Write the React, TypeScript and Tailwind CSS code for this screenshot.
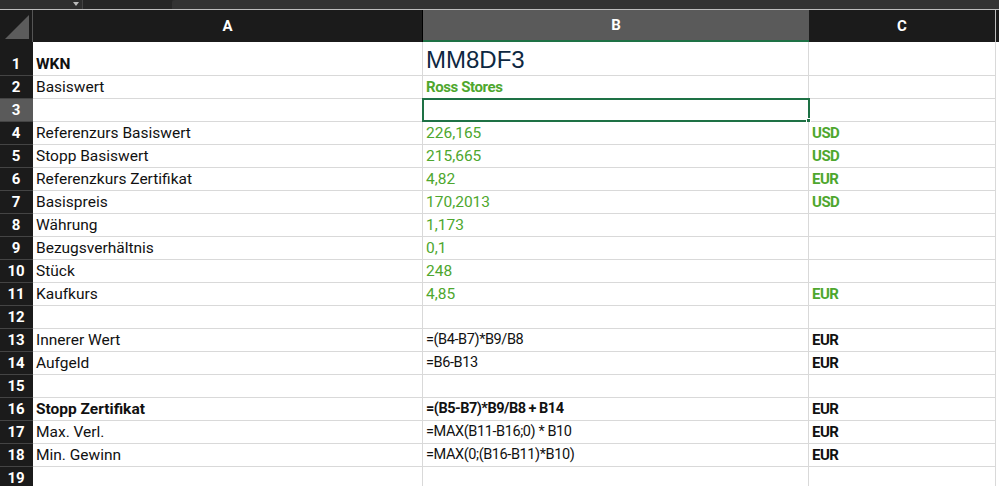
type Row = {
  n: number;
  a?: string;
  b?: string;
  c?: string;
  aBold?: boolean;
  bKind?: "green" | "greenBold" | "plain" | "bold" | "big";
  cKind?: "green" | "black";
  h?: string;
};

const rows: Row[] = [
  { n: 1, a: "WKN", aBold: true, b: "MM8DF3", bKind: "big", h: "h-[34px]" },
  { n: 2, a: "Basiswert", b: "Ross Stores", bKind: "greenBold" },
  { n: 3 },
  { n: 4, a: "Referenzurs Basiswert", b: "226,165", bKind: "green", c: "USD", cKind: "green" },
  { n: 5, a: "Stopp Basiswert", b: "215,665", bKind: "green", c: "USD", cKind: "green" },
  { n: 6, a: "Referenzkurs Zertifikat", b: "4,82", bKind: "green", c: "EUR", cKind: "green" },
  { n: 7, a: "Basispreis", b: "170,2013", bKind: "green", c: "USD", cKind: "green" },
  { n: 8, a: "Währung", b: "1,173", bKind: "green" },
  { n: 9, a: "Bezugsverhältnis", b: "0,1", bKind: "green" },
  { n: 10, a: "Stück", b: "248", bKind: "green" },
  { n: 11, a: "Kaufkurs", b: "4,85", bKind: "green", c: "EUR", cKind: "green" },
  { n: 12 },
  { n: 13, a: "Innerer Wert", b: "=(B4-B7)*B9/B8", bKind: "plain", c: "EUR", cKind: "black" },
  { n: 14, a: "Aufgeld", b: "=B6-B13", bKind: "plain", c: "EUR", cKind: "black" },
  { n: 15 },
  { n: 16, a: "Stopp Zertifikat", aBold: true, b: "=(B5-B7)*B9/B8 + B14", bKind: "bold", c: "EUR", cKind: "black" },
  { n: 17, a: "Max. Verl.", b: "=MAX(B11-B16;0) * B10", bKind: "plain", c: "EUR", cKind: "black" },
  { n: 18, a: "Min. Gewinn", b: "=MAX(0;(B16-B11)*B10)", bKind: "plain", c: "EUR", cKind: "black" },
  { n: 19 },
];

const bClass = {
  green: "text-[15.5px] text-[#4ea72e] pb-[1px]",
  greenBold: "text-[15px] font-bold text-[#4ea72e] tracking-[-0.4px] pb-[1px]",
  plain: "text-[14.5px] text-[#111] tracking-[-0.4px] pb-[1px]",
  bold: "text-[14.5px] font-bold text-[#111] tracking-[-0.5px] pb-[1px]",
  big: "text-[24px] leading-[28px] text-[#0e2841] font-['Liberation_Sans',sans-serif] pb-[1px]",
};

export default function App() {
  return (
    <div className="w-[999px] h-[486px] overflow-hidden bg-white font-['Roboto',sans-serif]">
      {/* formula bar strip */}
      <div className="flex h-[9px] bg-[#2a2a2a]">
        <div className="flex w-[82px] items-start justify-end bg-[#2e2e2e] pr-[3px]">
          <div className="mt-[2px] h-0 w-0 border-x-[3px] border-t-[4px] border-x-transparent border-t-[#bbb]" />
        </div>
        <div className="w-[90px] border-l border-[#444] bg-[#262626]" />
        <div className="flex-1 rounded-tl-[3px] bg-[#333]" />
      </div>
      <div className="h-px bg-[#bdbdbd]" />
      {/* column header */}
      <div className="flex h-[32px] bg-[#1b1b1b] text-[15px] font-bold text-white">
        <div className="flex w-[33px] items-end justify-end border-r border-[#555] p-[3px]">
          <div className="h-0 w-0 border-b-[24px] border-l-[24px] border-b-[#5c5c5c] border-l-transparent" />
        </div>
        <div className="flex w-[390px] items-center justify-center border-r border-[#000]">A</div>
        <div className="flex w-[386px] items-center justify-center border-b-2 border-[#1e7145] bg-[#5a5a5a]">B</div>
        <div className="flex w-[187px] items-center justify-center border-r border-[#bbb]">C</div>
        <div className="flex-1" />
      </div>
      {rows.map((r) => {
        const h = r.h ?? "h-[23px]";
        const selected = r.n === 3;
        return (
          <div key={r.n} className={`flex ${h} leading-[20px]`}>
            <div
              className={`flex w-[33px] items-end justify-center border-b border-[#444] pb-[1px] pr-[1px] text-[15px] font-bold text-white ${
                selected ? "bg-[#5a5a5a]" : "bg-[#1b1b1b]"
              }`}
            >
              {r.n}
            </div>
            <div
              className={`flex w-[390px] items-end border-b border-r border-[#d9d9d9] pb-[1px] pl-[3px] text-[15.5px] text-[#111] ${
                r.aBold ? "font-bold" : ""
              }`}
            >
              {r.a}
            </div>
            <div
              className={`relative flex w-[386px] items-end border-b border-r border-[#d9d9d9] pl-[3px] ${
                r.bKind ? bClass[r.bKind] : ""
              }`}
            >
              {selected && (
                <div className="absolute -left-px -top-[1px] h-[24px] w-[388px] border-2 border-[#1e7145]">
                  <div className="absolute -bottom-[3px] -right-[3px] h-[5px] w-[5px] border border-white bg-[#1e7145]" />
                </div>
              )}
              {r.b}
            </div>
            <div
              className={`flex w-[187px] items-end border-b border-r border-[#d9d9d9] pb-[1px] pl-[3px] text-[15px] font-bold tracking-[-0.5px] ${
                r.cKind === "green" ? "text-[#4ea72e]" : "text-[#111]"
              }`}
            >
              {r.c}
            </div>
            <div className="flex-1" />
          </div>
        );
      })}
    </div>
  );
}
